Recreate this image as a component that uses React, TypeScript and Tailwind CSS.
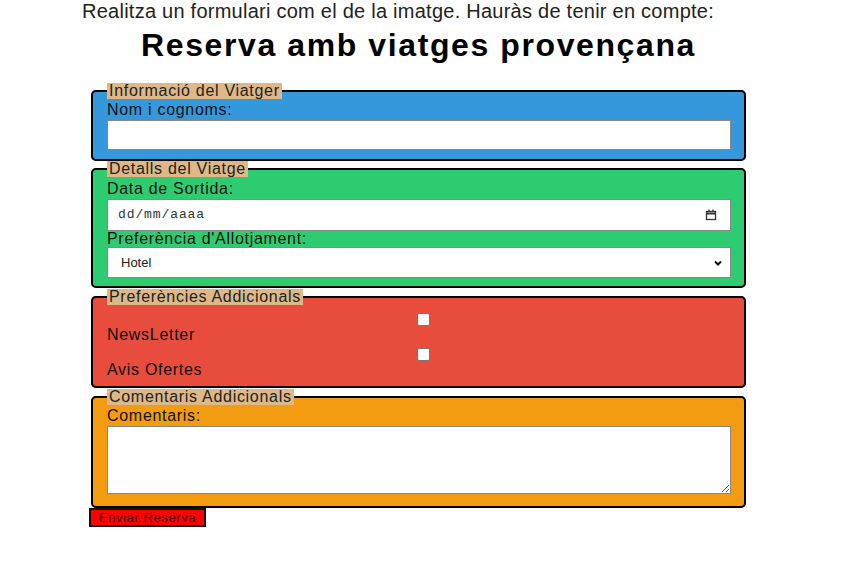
import React from 'react';

const FONT = { fontFamily: '"Liberation Sans", Arial, sans-serif' };

function Legend({ children }: { children: React.ReactNode }) {
  return (
    <legend className="bg-[#deb887] px-[2px] leading-[16px] text-[16px] tracking-[0.7px] text-[#222]">
      {children}
    </legend>
  );
}

function Check() {
  return (
    <div className="flex justify-center">
      <span className="block ml-[8px] w-[13px] h-[13px] bg-white border border-[#767676] rounded-[2px]" />
    </div>
  );
}

export default function App() {
  return (
    <div className="w-[867px] h-[588px] bg-white text-black overflow-hidden" style={FONT}>
      <p className="ml-[82px] text-[20px] leading-[22px] tracking-[0.25px] text-[#222]">
        Realitza un formulari com el de la imatge. Hauràs de tenir en compte:
      </p>

      <form className="ml-[89px] w-[659px] text-[16px] tracking-[0.7px]">
        <h1 className="text-center font-bold text-[32px] leading-[32px] tracking-[1.6px] mt-[7px] mb-[22px]">
          Reserva amb viatges provençana
        </h1>

        <fieldset className="mx-[2px] border-2 border-black rounded-[5px] bg-[#3498db] pl-[14px] pr-[13px] pb-[9px]">
          <Legend>Informació del Viatger</Legend>
          <label className="block leading-[21px] text-[#111]">Nom i cognoms:</label>
          <input type="text" className="block w-full h-[30px] bg-white border border-[#888]" />
        </fieldset>

        <fieldset className="mx-[2px] border-2 border-black rounded-[5px] bg-[#2ecc71] pl-[14px] pr-[13px] pb-[8px]">
          <Legend>Detalls del Viatge</Legend>
          <label className="block pt-[2px] leading-[20px] text-[#111]">Data de Sortida:</label>
          <div className="flex items-center justify-between w-full h-[32px] bg-white border border-[#888] pl-[10px] pr-[13px]">
            <span
              className="text-[13px] tracking-[0.9px] text-[#333]"
              style={{ fontFamily: '"Liberation Mono", monospace' }}
            >
              dd/mm/aaaa
            </span>
            <svg width="12" height="12" viewBox="0 0 12 12" fill="none" stroke="#333" strokeWidth="1.3">
              <rect x="1.5" y="2.5" width="9" height="8" />
              <line x1="1.5" y1="4.5" x2="10.5" y2="4.5" strokeWidth="2" />
              <line x1="4" y1="0.5" x2="4" y2="2.5" />
              <line x1="8" y1="0.5" x2="8" y2="2.5" />
            </svg>
          </div>
          <label className="block leading-[16px] text-[#111]">Preferència d'Allotjament:</label>
          <div className="flex items-center justify-between w-full h-[31px] bg-white border border-[#888] pl-[13px] pr-[6px]">
            <span className="text-[13px] tracking-normal text-[#222]">Hotel</span>
            <svg width="12" height="12" viewBox="0 0 12 12" fill="none" stroke="#111" strokeWidth="2">
              <path d="M3 4.5 L6 7.5 L9 4.5" />
            </svg>
          </div>
        </fieldset>

        <fieldset className="mx-[2px] mt-[1px] border-2 border-black rounded-[5px] bg-[#e74c3c] pl-[14px] pr-[13px] pb-[7px]">
          <Legend>Preferències Addicionals</Legend>
          <div className="pt-[8px]">
            <Check />
          </div>
          <label className="block leading-[18px] text-[#111]">NewsLetter</label>
          <div className="pt-[4px]">
            <Check />
          </div>
          <label className="block leading-[18px] text-[#111]">Avis Ofertes</label>
        </fieldset>

        <fieldset className="mx-[2px] mt-[1px] border-2 border-black rounded-[5px] bg-[#f39c12] pl-[14px] pr-[13px] pb-[12px]">
          <Legend>Comentaris Addicionals</Legend>
          <label className="block leading-[21px] text-[#111]">Comentaris:</label>
          <textarea className="block w-full h-[68px] bg-white border border-[#888] resize-y" />
        </fieldset>

        <button
          type="button"
          className="block w-[117px] h-[19px] bg-[#ff0000] border-2 border-[#111] text-[13px] leading-[15px] text-[#400] tracking-[0.6px]"
        >
          Enviar Reserva
        </button>
      </form>
    </div>
  );
}
